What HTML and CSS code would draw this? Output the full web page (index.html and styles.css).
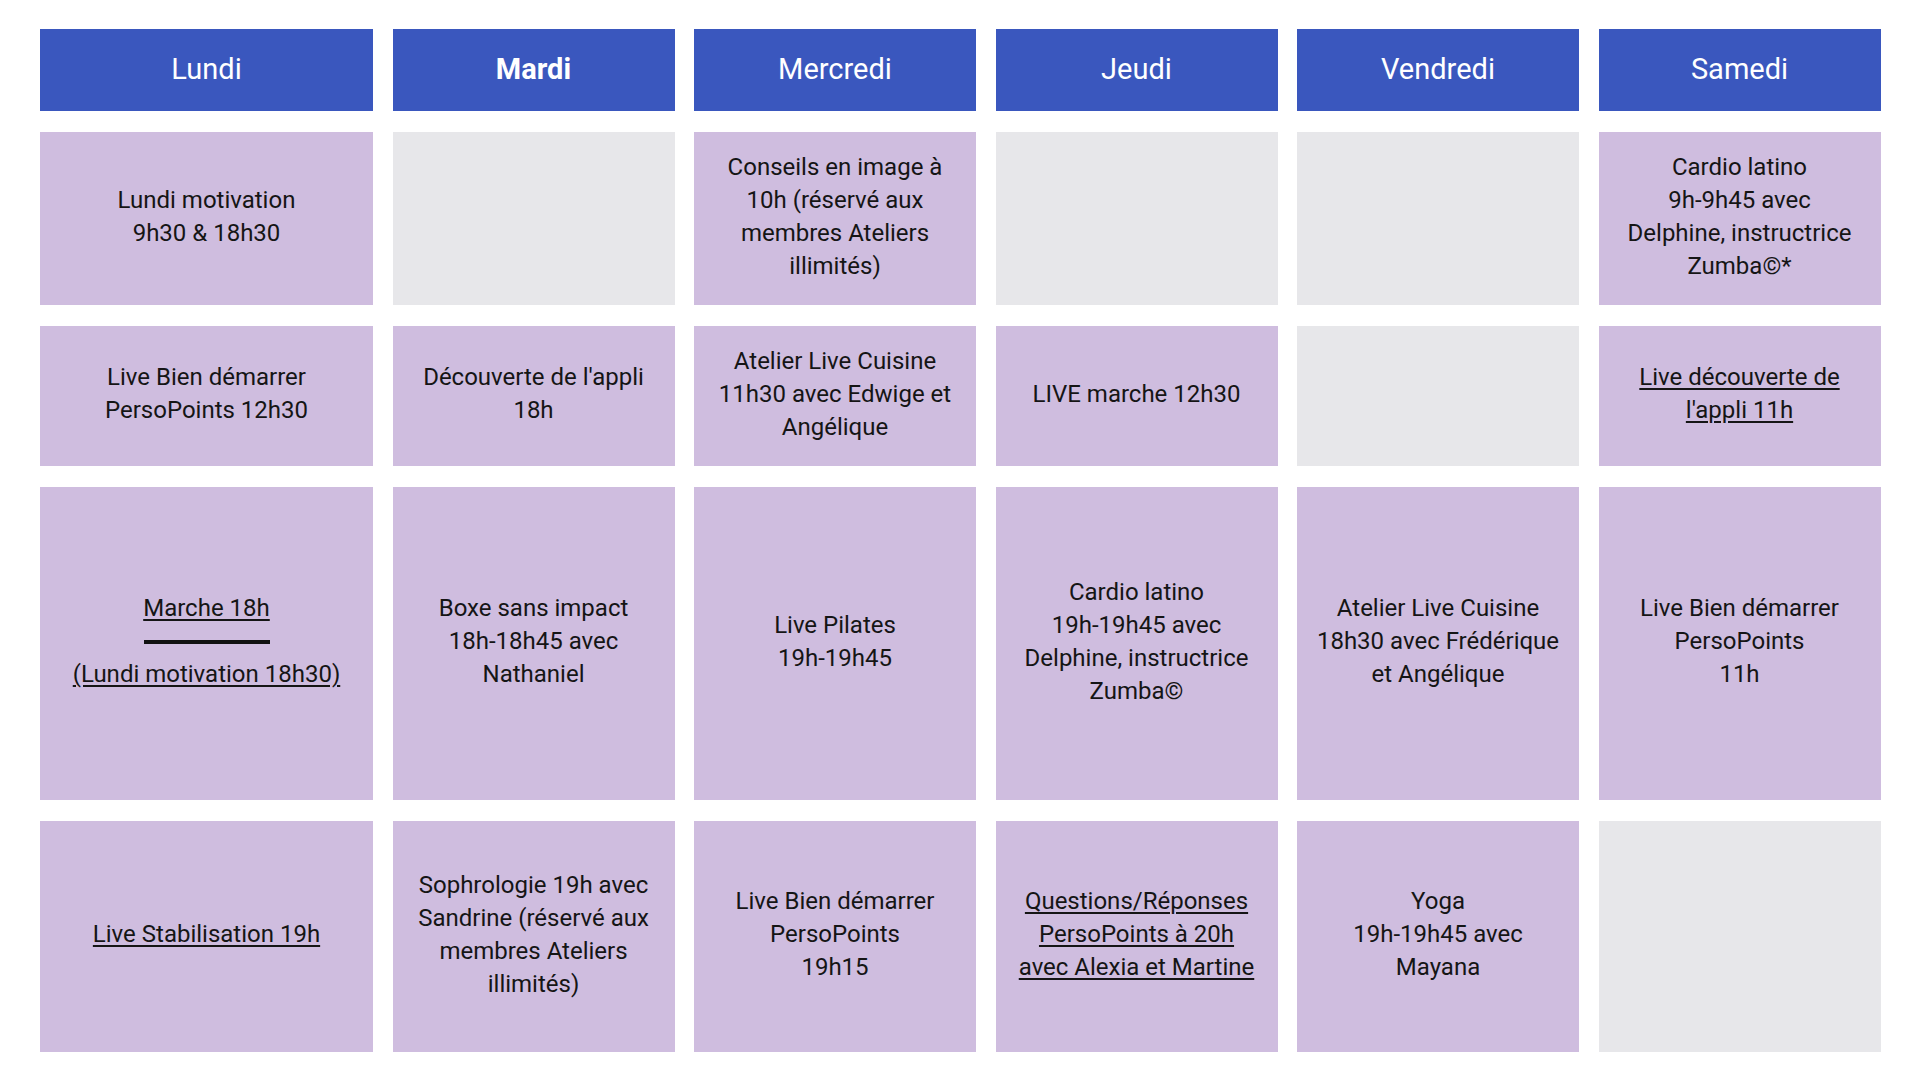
FILE: index.html
```html
<!DOCTYPE html>
<html lang="fr">
<head>
<meta charset="utf-8">
<title>Planning</title>
<link rel="stylesheet" href="styles.css">
</head>
<body>
<div class="planning">
  <div class="day">Lundi</div>
  <div class="day day-bold">Mardi</div>
  <div class="day">Mercredi</div>
  <div class="day">Jeudi</div>
  <div class="day">Vendredi</div>
  <div class="day">Samedi</div>

  <div class="cell">Lundi motivation<br>9h30 &amp; 18h30</div>
  <div class="cell empty"></div>
  <div class="cell">Conseils en image à<br>10h (réservé aux<br>membres Ateliers<br>illimités)</div>
  <div class="cell empty"></div>
  <div class="cell empty"></div>
  <div class="cell">Cardio latino<br>9h-9h45 avec<br>Delphine, instructrice<br>Zumba©*</div>

  <div class="cell">Live Bien démarrer<br>PersoPoints 12h30</div>
  <div class="cell">Découverte de l'appli<br>18h</div>
  <div class="cell">Atelier Live Cuisine<br>11h30 avec Edwige et<br>Angélique</div>
  <div class="cell">LIVE marche 12h30</div>
  <div class="cell empty"></div>
  <div class="cell"><span class="link">Live découverte de<br>l'appli 11h</span></div>

  <div class="cell">
    <span class="link">Marche 18h</span>
    <span class="bar-line"><span class="bar"></span></span>
    <span class="link">(Lundi motivation 18h30)</span>
  </div>
  <div class="cell">Boxe sans impact<br>18h-18h45 avec<br>Nathaniel</div>
  <div class="cell">Live Pilates<br>19h-19h45</div>
  <div class="cell">Cardio latino<br>19h-19h45 avec<br>Delphine, instructrice<br>Zumba©</div>
  <div class="cell">Atelier Live Cuisine<br>18h30 avec Frédérique<br>et Angélique</div>
  <div class="cell">Live Bien démarrer<br>PersoPoints<br>11h</div>

  <div class="cell"><span class="link">Live Stabilisation 19h</span></div>
  <div class="cell">Sophrologie 19h avec<br>Sandrine (réservé aux<br>membres Ateliers<br>illimités)</div>
  <div class="cell">Live Bien démarrer<br>PersoPoints<br>19h15</div>
  <div class="cell"><span class="link">Questions/Réponses<br>PersoPoints à 20h<br>avec Alexia et Martine</span></div>
  <div class="cell">Yoga<br>19h-19h45 avec<br>Mayana</div>
  <div class="cell empty"></div>
</div>
</body>
</html>
```

FILE: styles.css
```css
html, body {
  margin: 0;
  padding: 0;
  background: #ffffff;
}

body {
  font-family: Roboto, "Liberation Sans", sans-serif;
  color: #151515;
}

.planning {
  display: grid;
  grid-template-columns: 333px repeat(5, 282px);
  grid-template-rows: 82px 173px 140px 313px 231px;
  column-gap: 19.5px;
  row-gap: 21px;
  padding: 29px 0 0 40px;
}

.day {
  background: #3a57be;
  color: #ffffff;
  font-size: 29px;
  font-weight: 400;
  display: flex;
  align-items: center;
  justify-content: center;
  padding-bottom: 3px;
  box-sizing: border-box;
}

.day-bold {
  font-weight: 700;
}

.cell {
  background: #cfbddf;
  font-size: 24px;
  line-height: 33px;
  text-align: center;
  display: flex;
  flex-direction: column;
  align-items: center;
  justify-content: center;
  padding-bottom: 4px;
  box-sizing: border-box;
}

.cell.empty {
  background: #e7e7ea;
}

.link {
  text-decoration: underline;
  text-underline-offset: 3px;
  text-decoration-thickness: 1.5px;
}

.bar-line {
  height: 33px;
  display: flex;
  align-items: center;
}

.bar {
  width: 126px;
  height: 4px;
  background: #111111;
}
```
